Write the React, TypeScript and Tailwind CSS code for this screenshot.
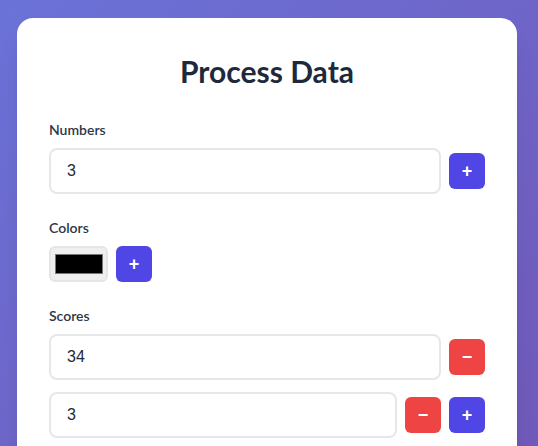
import React, { useState } from 'react'

const ui = '"Lato", "Noto Sans", sans-serif'
const field = '"Liberation Sans", Arial, sans-serif'

function AddButton() {
  return (
    <button
      type="button"
      className="w-9 h-9 shrink-0 rounded-md bg-[#4f46e5] text-white text-[18px] font-bold leading-none flex items-center justify-center"
      style={{ fontFamily: field }}
    >
      +
    </button>
  )
}

function RemoveButton() {
  return (
    <button
      type="button"
      className="w-9 h-9 shrink-0 rounded-md bg-[#ef4444] text-white text-[18px] font-bold leading-none flex items-center justify-center"
      style={{ fontFamily: field }}
    >
      −
    </button>
  )
}

function TextField({ value }: { value: string }) {
  return (
    <input
      defaultValue={value}
      className="flex-1 min-w-0 h-[46px] rounded-lg border-2 border-[#e5e7eb] bg-white pl-4 pr-3 text-[16px] text-[#1f2937] outline-none"
      style={{ fontFamily: field }}
    />
  )
}

function Label({ children }: { children: React.ReactNode }) {
  return <div className="mb-2 text-[14px] font-semibold leading-5 text-[#2d3748]">{children}</div>
}

export default function App() {
  const [numbers] = useState(['3'])
  const [scores] = useState(['34', '3'])

  return (
    <div
      className="min-h-screen bg-gradient-to-br from-[#6a72d8] to-[#7158b8] pt-[18px] pl-[17px]"
      style={{ fontFamily: ui }}
    >
      <div className="w-[500px] rounded-2xl bg-white px-8 pt-8 pb-8 shadow-xl">
        <h1 className="mb-7 text-center text-[30px] font-bold leading-[42px] text-[#1e293b]">Process Data</h1>

        <div className="mb-6">
          <Label>Numbers</Label>
          {numbers.map((n, i) => (
            <div key={i} className="flex items-center gap-2">
              <TextField value={n} />
              <AddButton />
            </div>
          ))}
        </div>

        <div className="mb-6">
          <Label>Colors</Label>
          <div className="flex items-center gap-2">
            <div className="w-[59px] h-9 rounded-md border-2 border-[#e5e5e5] bg-[#efefef] flex items-center justify-center">
              <div className="w-[48px] h-[20px] bg-black border border-[#777]" />
            </div>
            <AddButton />
          </div>
        </div>

        <div className="mb-6">
          <Label>Scores</Label>
          <div className="flex flex-col gap-3">
            {scores.map((s, i) => (
              <div key={i} className="flex items-center gap-2">
                <TextField value={s} />
                <RemoveButton />
                {i === scores.length - 1 && <AddButton />}
              </div>
            ))}
          </div>
        </div>
      </div>
    </div>
  )
}
